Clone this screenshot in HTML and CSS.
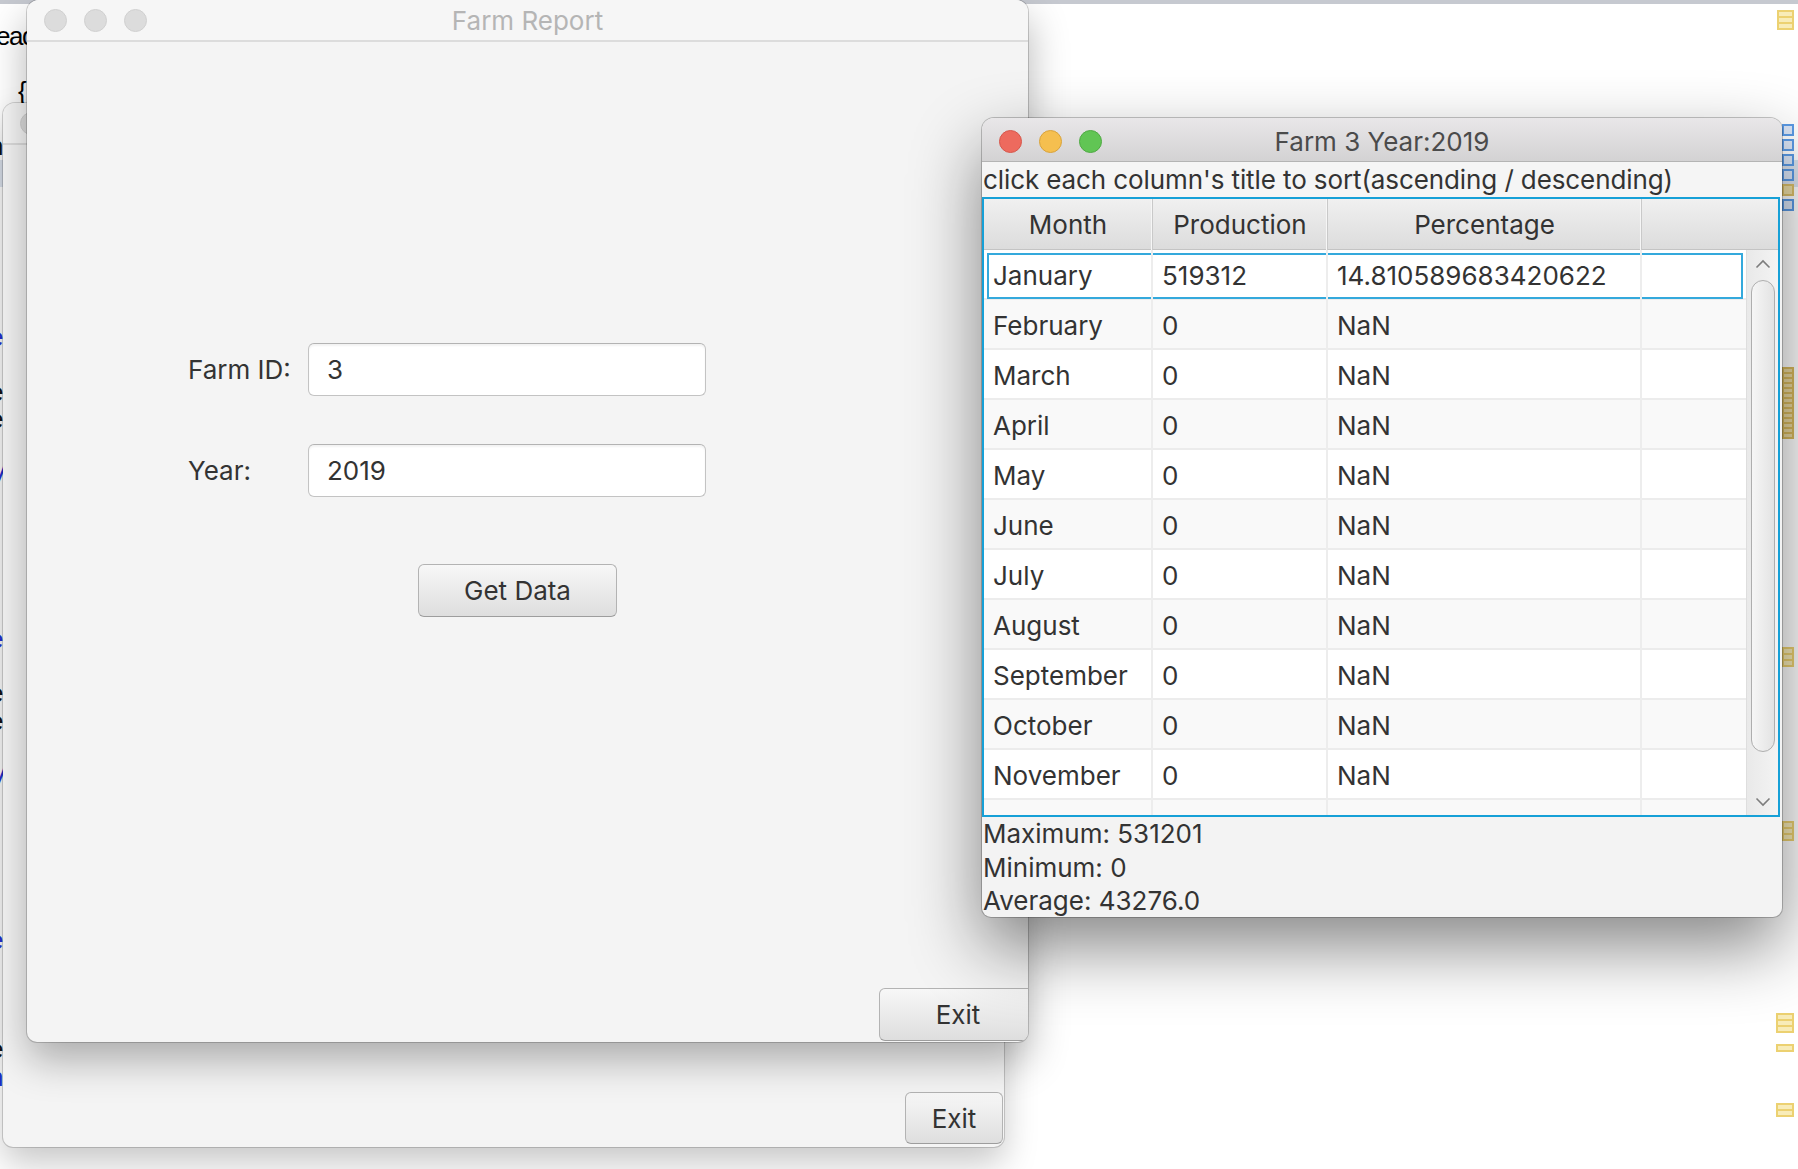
FILE: index.html
```html
<!DOCTYPE html>
<html lang="en">
<head>
<meta charset="utf-8">
<title>Farm Report</title>
<link rel="stylesheet" href="styles.css">
</head>
<body>
<div class="desktop">
  <div class="ide">
    <div class="ide-topbar"></div>
    <div class="ide-code">
      <div class="ln"><span class="frag-ead">ead</span></div>
      <div class="ln"></div>
      <div class="ln"><span class="frag-brace">{</span></div>
      <div class="ln"></div>
      <div class="ln"><span class="frag k">n</span></div>
      <div class="ln hl"></div>
      <div class="ln"></div><div class="ln"></div><div class="ln"></div><div class="ln"></div><div class="ln"></div>
      <div class="ln"><span class="frag b">e</span></div>
      <div class="ln"></div>
      <div class="ln"><span class="frag k">e</span></div>
      <div class="ln"><span class="frag k">e</span></div>
      <div class="ln"><span class="frag b">:</span></div>
      <div class="ln"><span class="frag b">V</span></div>
      <div class="ln"><span class="frag b">l</span></div>
      <div class="ln"></div><div class="ln"></div><div class="ln"></div><div class="ln"></div>
      <div class="ln"><span class="frag b">e</span></div>
      <div class="ln"></div>
      <div class="ln"><span class="frag k">e</span></div>
      <div class="ln"><span class="frag k">e</span></div>
      <div class="ln"><span class="frag b">:</span></div>
      <div class="ln"><span class="frag b">V</span></div>
      <div class="ln"><span class="frag b">l</span></div>
      <div class="ln"></div><div class="ln"></div><div class="ln"></div><div class="ln"></div>
      <div class="ln"><span class="frag b">e</span></div>
      <div class="ln"></div><div class="ln"></div><div class="ln"></div>
      <div class="ln"><span class="frag k">e</span></div>
      <div class="ln"><span class="frag b">n</span></div>
      <div class="ln"><span class="frag b">l</span></div>
    </div>
  </div>

  <div class="ruler">
    <div class="mk" style="top:10px"><i></i><i></i><i></i></div>
    <div class="mk blue" style="top:124px"><i></i><i></i><i></i><i></i><i class="y"></i><i></i></div>
    <div class="mk small" style="top:367px"><i></i><i></i><i></i><i></i><i></i><i></i><i></i><i></i><i></i><i></i><i></i><i></i><i></i><i></i></div>
    <div class="mk" style="top:647px"><i></i><i></i><i></i></div>
    <div class="mk" style="top:821px"><i></i><i></i><i></i></div>
    <div class="mk wide" style="top:1013px"><i></i><i></i><i></i></div>
    <div class="mk wide" style="top:1044px"><i></i></div>
    <div class="mk wide" style="top:1103px"><i></i><i></i></div>
  </div>

  <div class="win win-back">
    <div class="titlebar inactive">
      <div class="lights"><span class="light off"></span><span class="light off"></span><span class="light off"></span></div>
      <div class="title"></div>
      <div></div>
    </div>
    <div class="win-body back-body">
      <button class="btn btn-exit-back">Exit</button>
    </div>
  </div>

  <div class="win win-front">
    <div class="titlebar inactive">
      <div class="lights"><span class="light off"></span><span class="light off"></span><span class="light off"></span></div>
      <div class="title">Farm Report</div>
      <div></div>
    </div>
    <div class="win-body front-body">
      <div class="form">
        <label class="form-label">Farm ID:</label>
        <div class="input">3</div>
        <label class="form-label">Year:</label>
        <div class="input">2019</div>
      </div>
      <button class="btn btn-get">Get Data</button>
      <button class="btn btn-exit-front">Exit</button>
    </div>
  </div>

  <div class="win win-farm">
    <div class="titlebar active">
      <div class="lights"><span class="light red"></span><span class="light yellow"></span><span class="light green"></span></div>
      <div class="title">Farm 3 Year:2019</div>
      <div></div>
    </div>
    <div class="hint">click each column's title to sort(ascending / descending)</div>
    <div class="table">
      <div class="thead">
        <div class="th">Month</div>
        <div class="th">Production</div>
        <div class="th">Percentage</div>
        <div class="th"></div>
      </div>
      <div class="tbody">
        <div class="rows">
          <div class="tr focused"><div class="td">January</div><div class="td">519312</div><div class="td">14.810589683420622</div><div class="td"></div></div>
          <div class="tr odd"><div class="td">February</div><div class="td">0</div><div class="td">NaN</div><div class="td"></div></div>
          <div class="tr"><div class="td">March</div><div class="td">0</div><div class="td">NaN</div><div class="td"></div></div>
          <div class="tr odd"><div class="td">April</div><div class="td">0</div><div class="td">NaN</div><div class="td"></div></div>
          <div class="tr"><div class="td">May</div><div class="td">0</div><div class="td">NaN</div><div class="td"></div></div>
          <div class="tr odd"><div class="td">June</div><div class="td">0</div><div class="td">NaN</div><div class="td"></div></div>
          <div class="tr"><div class="td">July</div><div class="td">0</div><div class="td">NaN</div><div class="td"></div></div>
          <div class="tr odd"><div class="td">August</div><div class="td">0</div><div class="td">NaN</div><div class="td"></div></div>
          <div class="tr"><div class="td">September</div><div class="td">0</div><div class="td">NaN</div><div class="td"></div></div>
          <div class="tr odd"><div class="td">October</div><div class="td">0</div><div class="td">NaN</div><div class="td"></div></div>
          <div class="tr"><div class="td">November</div><div class="td">0</div><div class="td">NaN</div><div class="td"></div></div>
          <div class="tr odd"><div class="td"></div><div class="td"></div><div class="td"></div><div class="td"></div></div>
        </div>
        <div class="vscroll">
          <div class="sb-arrow"><svg width="16" height="10" viewBox="0 0 16 10"><polyline points="1.5,8.5 8,2 14.5,8.5" fill="none" stroke="#7d7d7d" stroke-width="1.6"/></svg></div>
          <div class="sb-track"><div class="sb-thumb"></div></div>
          <div class="sb-arrow"><svg width="16" height="10" viewBox="0 0 16 10"><polyline points="1.5,1.5 8,8 14.5,1.5" fill="none" stroke="#7d7d7d" stroke-width="1.6"/></svg></div>
        </div>
      </div>
    </div>
    <div class="stats">
      <div>Maximum: 531201</div>
      <div>Minimum: 0</div>
      <div>Average: 43276.0</div>
    </div>
  </div>
</div>
</body>
</html>
```

FILE: styles.css
```css
* { box-sizing: border-box; }
html, body { margin: 0; padding: 0; }
body {
  width: 1798px; height: 1169px; overflow: hidden;
  font-family: Inter, "Liberation Sans", sans-serif;
  color: #333;
}
.desktop { position: relative; width: 1798px; height: 1169px; background: #fff; overflow: hidden; }

/* background editor */
.ide { width: 100%; height: 100%; }
.ide-topbar { height: 4px; background: #c6c9d0; }
.ide-code { padding-top: 19px; font-size: 26px; line-height: 27.4px; color: #000; font-family: "Liberation Sans", sans-serif; }
.ln { height: 27.4px; white-space: nowrap; }
.ln.hl { background: #dde4ef; }
.frag-ead { margin-left: -4px; letter-spacing: -1.5px; }
.frag-brace { margin-left: 18px; }
.frag { display: inline-block; margin-left: -11px; }
.frag.k { color: #111; }
.frag.b { color: #2330d8; }

/* overview ruler markers */
.ruler { position: absolute; left: 1776px; top: 0; width: 20px; height: 100%; }
.mk { position: absolute; left: 6px; width: 12px; display: flex; flex-direction: column; }
.mk i { display: block; height: 8px; background: #f8ecb8; border: 2px solid #ecd171; margin-top: -2px; }
.mk i:first-child { margin-top: 0; }
.mk.small i { height: 7px; background: #ead9a0; border-color: #d8b95c; }
.mk.wide { left: 0; width: 18px; }
.mk.blue { left: 6px; }
.mk.blue i { height: 12px; background: #dbe6f7; border-color: #5b9be6; margin-top: 3px; }
.mk.blue i:first-child { margin-top: 0; }
.mk.blue i.y { background: #efe0a8; border-color: #dcc06a; }
.mk:first-child { left: 1px; width: 17px; }

/* windows */
.win { position: absolute; overflow: hidden; display: flex; flex-direction: column; }
.win-back { left: 3px; top: 103px; width: 1001px; height: 1044px; background: #f4f4f4; border-radius: 12px 12px 10px 10px; box-shadow: 0 0 0 1px rgba(0,0,0,0.16), 0 16px 34px rgba(0,0,0,0.22); }
.win-front { left: 27px; top: 0; width: 1001px; height: 1042px; background: #f4f4f4; border-radius: 12px 12px 10px 10px; box-shadow: 0 0 0 1px rgba(0,0,0,0.18), 0 18px 40px rgba(0,0,0,0.3); }
.win-farm { left: 982px; top: 118px; width: 800px; height: 799px; background: #f3f3f3; border-radius: 12px 12px 9px 9px; box-shadow: 0 0 0 1px rgba(0,0,0,0.22), 0 30px 70px rgba(0,0,0,0.48); }

.titlebar { display: grid; grid-template-columns: 1fr auto 1fr; align-items: center; flex: none; }
.titlebar.inactive { height: 42px; padding-top: 1px; background: #f6f6f6; border-bottom: 2px solid #dcdcdc; }
.titlebar.active { height: 44px; padding-top: 3px; background: linear-gradient(#e9e7e9, #d3d2d3); border-bottom: 1px solid #b4b4b4; }
.lights { display: flex; gap: 17px; padding-left: 17px; }
.light { width: 23px; height: 23px; border-radius: 50%; }
.light.off { background: #dcdcdc; border: 1px solid #d0d0d0; }
.light.red { background: #ed6a5e; border: 1px solid #d6574c; }
.light.yellow { background: #f5bf4f; border: 1px solid #d9a33b; }
.light.green { background: #61c554; border: 1px solid #4faa43; }
.title { font-size: 26px; white-space: nowrap; }
.inactive .title { color: #b5b5b5; }
.active .title { color: #4b4b4b; }

.win-body { flex: 1; display: flex; flex-direction: column; }

/* buttons & inputs */
.btn {
  font-family: inherit; font-size: 26px; color: #333;
  background: linear-gradient(#f7f7f7, #dedede);
  border: 1px solid #b3b3b3; border-bottom-color: #9d9d9d; border-radius: 6px;
  height: 53px; padding: 0; flex: none;
}
.back-body { justify-content: flex-end; align-items: flex-end; padding: 0 1px 3px 0; }
.btn-exit-back { width: 98px; height: 52px; }

.front-body { padding-top: 301px; }
.form { display: grid; grid-template-columns: 120px 398px; row-gap: 48px; margin-left: 161px; align-items: center; }
.form-label { font-size: 26px; color: #333; }
.input {
  height: 53px; background: #fff; border: 1px solid #c3c3c3; border-top-color: #b3b3b3; border-radius: 6px;
  box-shadow: inset 0 2px 2px rgba(0,0,0,0.05);
  font-size: 26px; line-height: 51px; padding-left: 18px; color: #333;
}
.btn-get { width: 199px; margin-left: 391px; margin-top: 67px; }
.btn-exit-front { width: 158px; margin-top: auto; margin-left: 852px; margin-bottom: 1px; }

/* farm table window */
.hint { height: 35px; line-height: 35px; font-size: 26px; color: #333; white-space: nowrap; padding-left: 1px; background: #f5f5f5; flex: none; letter-spacing: -0.1px; }
.table { height: 620px; border: 2px solid #16a0d7; background: #f4f4f4; display: flex; flex-direction: column; flex: none; margin-right: 2px; }
.thead { display: grid; grid-template-columns: 169px 175px 314px 1fr; height: 51px; background: linear-gradient(#f0f0f0, #dcdcdc); border-bottom: 1px solid #c4c4c4; flex: none; }
.th { font-size: 26px; text-align: center; line-height: 52px; border-right: 1px solid #c9c9c9; box-shadow: inset -1px 0 0 #f6f6f6; }
.th:last-child { border-right: none; box-shadow: none; }
.tbody { flex: 1; display: grid; grid-template-columns: 1fr 32px; overflow: hidden; }
.rows { overflow: hidden; }
.tr { position: relative; display: grid; grid-template-columns: 169px 175px 314px 1fr; height: 50px; background: #fff; border-bottom: 2px solid #ececec; }
.tr.odd { background: #f9f9f9; }
.tr.focused::before { content: ""; position: absolute; left: 3px; right: 3px; top: 3px; bottom: -1px; border: 2px solid #34a9dc; }
.td { position: relative; font-size: 26px; line-height: 51px; padding-left: 9px; border-right: 2px solid #ededed; white-space: nowrap; }
.td:last-child { border-right: none; }

.vscroll { display: flex; flex-direction: column; background: linear-gradient(90deg, #e9e9e9, #f3f3f3); border-left: 1px solid #dedede; }
.sb-arrow { height: 27px; display: flex; align-items: center; justify-content: center; flex: none; }
.sb-track { flex: 1; padding: 3px 3px 36px 4px; }
.sb-thumb { height: 100%; border: 1px solid #aeaeae; border-radius: 12px; background: linear-gradient(90deg, #f6f6f6, #e3e3e3); }

.stats { font-size: 26px; line-height: 33.5px; color: #333; padding-left: 1px; white-space: nowrap; }
```
